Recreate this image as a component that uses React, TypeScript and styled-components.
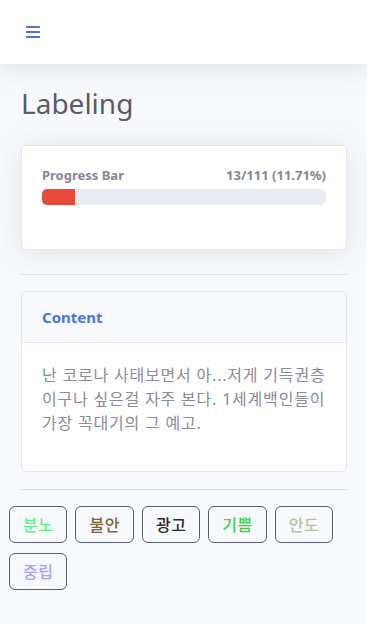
import React from 'react';
import styled, { createGlobalStyle } from 'styled-components';

const GlobalStyle = createGlobalStyle`
  html, body {
    margin: 0;
    padding: 0;
    background: #f8f9fc;
  }
  body {
    font-family: "Noto Sans", "Noto Sans CJK KR", sans-serif;
    color: #858796;
  }
  * {
    box-sizing: border-box;
  }
`;

const Page = styled.div`
  min-height: 624px;
  background: #f8f9fc;
`;

const Topbar = styled.nav`
  height: 64px;
  background: #fff;
  display: flex;
  align-items: center;
  padding: 0 26px;
  margin-bottom: 23px;
  box-shadow: 0 2px 28px 0 rgba(58, 59, 69, 0.15);
`;

const MenuButton = styled.button`
  border: none;
  background: none;
  padding: 0;
  display: flex;
  cursor: pointer;
`;

const Container = styled.div`
  padding: 0 20px 0 21px;
`;

const Title = styled.h1`
  margin: 0 0 24px;
  font-size: 28px;
  line-height: 1.2;
  font-weight: 400;
  color: #5a5c69;
`;

const Card = styled.div<{ $spaced?: boolean }>`
  background: #fff;
  border: 1px solid #e3e6f0;
  border-radius: 5px;
  margin-bottom: ${p => (p.$spaced ? '24px' : '0')};
  box-shadow: ${p => (p.$spaced ? '0 2px 28px 0 rgba(58, 59, 69, 0.12)' : 'none')};
  overflow: hidden;
`;

const CardBody = styled.div`
  padding: 20px;
`;

const CardHeader = styled.div`
  background: #f8f9fc;
  border-bottom: 1px solid #e3e6f0;
  padding: 13px 20px;
  line-height: 24px;
  font-size: 15px;
  font-weight: 700;
  color: #4e73df;
`;

const ProgressHead = styled.div`
  display: flex;
  justify-content: space-between;
  font-size: 13px;
  font-weight: 700;
  line-height: 19px;
  color: #858796;
  margin-bottom: 4px;
`;

const Track = styled.div`
  height: 16px;
  background: #eaecf4;
  border-radius: 5px;
  overflow: hidden;
  margin-bottom: 24px;
`;

const Fill = styled.div`
  height: 100%;
  background: #e74a3b;
`;

const Rule = styled.hr`
  border: none;
  border-top: 1px solid #dddfeb;
  margin: 17px 0 16px;
`;

const Text = styled.p`
  margin: 0 0 16px;
  font-size: 16px;
  line-height: 24px;
  letter-spacing: 0.8px;
  color: #8a8a9a;
  word-break: break-all;
`;

const TagList = styled.div`
  display: flex;
  flex-wrap: wrap;
  column-gap: 8px;
  row-gap: 10px;
  margin: 0 -12px;
  padding-bottom: 24px;
`;

const Tag = styled.button<{ $color: string }>`
  font-family: "Noto Sans CJK KR", sans-serif;
  font-size: 16px;
  font-weight: 500;
  line-height: 23px;
  letter-spacing: 0.5px;
  padding: 6px 13px;
  border: 1px solid #5a5c69;
  border-radius: 6px;
  background: transparent;
  color: ${p => p.$color};
  cursor: pointer;
`;

const tags = [
  { label: '분노', color: '#5af57c' },
  { label: '불안', color: '#7a6534' },
  { label: '광고', color: '#2a2a22' },
  { label: '기쁨', color: '#3ed43e' },
  { label: '안도', color: '#b6c29c' },
  { label: '중립', color: '#ab9ff7' },
];

const done = 13;
const total = 111;

const App: React.FC = () => {
  const pct = (done / total) * 100;
  return (
    <Page>
      <GlobalStyle />
      <Topbar>
        <MenuButton aria-label="menu">
          <svg width="14" height="12" viewBox="0 0 14 12">
            <rect x="0" y="0" width="14" height="2" rx="0.5" fill="#4e73df" />
            <rect x="0" y="5" width="14" height="2" rx="0.5" fill="#4e73df" />
            <rect x="0" y="10" width="14" height="2" rx="0.5" fill="#4e73df" />
          </svg>
        </MenuButton>
      </Topbar>
      <Container>
        <Title>Labeling</Title>
        <Card $spaced>
          <CardBody>
            <ProgressHead>
              <span>Progress Bar</span>
              <span>{done}/{total} ({pct.toFixed(2)}%)</span>
            </ProgressHead>
            <Track>
              <Fill style={{ width: `${pct}%` }} />
            </Track>
          </CardBody>
        </Card>
        <Rule />
        <Card>
          <CardHeader>Content</CardHeader>
          <CardBody>
            <Text>난 코로나 사태보면서 아...저게 기득권층이구나 싶은걸 자주 본다. 1세계백인들이 가장 꼭대기의 그 예고.</Text>
          </CardBody>
        </Card>
        <Rule />
        <TagList>
          {tags.map(t => (
            <Tag key={t.label} $color={t.color}>{t.label}</Tag>
          ))}
        </TagList>
      </Container>
    </Page>
  );
};

export default App;
